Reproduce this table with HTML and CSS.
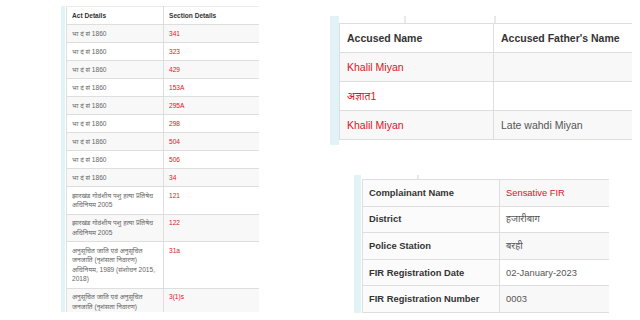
FILE: index.html
```html
<!DOCTYPE html>
<html>
<head>
  <title>FIR Details</title>
  <link rel="stylesheet" href="styles.css">
</head>
<body>

  <div class="board">

    <div class="panel acts">
      <table class="grid">
        <thead>
          <tr><th class="w-act">Act Details</th><th>Section Details</th></tr>
        </thead>
        <tbody>
          <tr><td>भा दं सं 1860</td><td class="red">341</td></tr>
          <tr><td>भा दं सं 1860</td><td class="red">323</td></tr>
          <tr><td>भा दं सं 1860</td><td class="red">429</td></tr>
          <tr><td>भा दं सं 1860</td><td class="red">153A</td></tr>
          <tr><td>भा दं सं 1860</td><td class="red">295A</td></tr>
          <tr><td>भा दं सं 1860</td><td class="red">298</td></tr>
          <tr><td>भा दं सं 1860</td><td class="red">504</td></tr>
          <tr><td>भा दं सं 1860</td><td class="red">506</td></tr>
          <tr><td>भा दं सं 1860</td><td class="red">34</td></tr>
          <tr><td>झारखंड गोवंशीय पशु हत्या प्रतिषेध अधिनियम 2005</td><td class="red">121</td></tr>
          <tr><td>झारखंड गोवंशीय पशु हत्या प्रतिषेध अधिनियम 2005</td><td class="red">122</td></tr>
          <tr><td>अनुसूचित जाति एवं अनुसूचित जनजाति (नृशंसता निवारण) अधिनियम, 1989 (संशोधन 2015, 2018)</td><td class="red">31a</td></tr>
          <tr><td>अनुसूचित जाति एवं अनुसूचित जनजाति (नृशंसता निवारण)</td><td class="red">3(1)s</td></tr>
        </tbody>
      </table>
    </div>

    <div class="side">

      <div class="panel accused">
        <div class="cut">
          <span class="cut-a"></span><span class="cut-b"></span>
        </div>
        <table class="grid">
          <thead>
            <tr><th class="w-name">Accused Name</th><th>Accused Father's Name</th></tr>
          </thead>
          <tbody>
            <tr><td class="red">Khalil Miyan</td><td></td></tr>
            <tr><td class="red">अज्ञात1</td><td></td></tr>
            <tr><td class="red">Khalil Miyan</td><td>Late wahdi Miyan</td></tr>
          </tbody>
        </table>
      </div>

      <div class="panel info">
        <div class="cut">
          <span class="cut-c"></span>
        </div>
        <table class="grid">
          <tbody>
            <tr><th class="w-label">Complainant Name</th><td class="red">Sensative FIR</td></tr>
            <tr><th>District</th><td>हजारीबाग</td></tr>
            <tr><th>Police Station</th><td>बरही</td></tr>
            <tr><th>FIR Registration Date</th><td>02-January-2023</td></tr>
            <tr><th>FIR Registration Number</th><td>0003</td></tr>
          </tbody>
        </table>
      </div>

    </div>

  </div>

</body>
</html>
```

FILE: styles.css
```css
html, body { margin: 0; height: 320px; overflow: hidden; background: #fff; }
body { font-family: "Liberation Sans", Arial, "Noto Sans", sans-serif; color: #555; }

.board { display: flex; align-items: flex-start; }
.side { display: flex; flex-direction: column; margin-left: 71px; }

.panel { border-left: 4px solid #e2f3f8; overflow: hidden; }

.grid { border-collapse: collapse; width: 100%; table-layout: fixed; }
.grid th, .grid td { border: 1px solid #dedede; text-align: left; vertical-align: top; }
.grid tr > :last-child { border-right: 0; }
.grid th { color: #333; font-weight: bold; }
.grid tbody tr:nth-child(odd) td { background: #f8f8f8; }
.red { color: #d9161c; }

/* act list, small print */
.acts { width: 193px; height: 306px; margin: 6px 0 0 61px; padding-left: 1px; }
.acts .grid { font-size: 6.6px; line-height: 9.5px; }
.acts th, .acts td { padding: 3.5px 5px 4px; }
.acts thead th { border-top-color: #ececec; }
.acts td { color: #666; }
.acts .red { color: #d9161c; }
.w-act { width: 86px; }

/* accused table */
.accused { width: 293px; margin-top: 16px; border-left-width: 9px; padding-bottom: 5px; }
.accused .grid { font-size: 10.5px; line-height: 13px; }
.accused th, .accused td { padding: 7.5px 7px; }
.w-name { width: 139px; }

/* complainant info */
.info { width: 247px; margin: 30px 0 0 24px; border-left-width: 7px; padding-left: 1px; }
.info .grid { font-size: 9.4px; line-height: 12px; }
.info th, .info td { padding: 6.8px 6px; }
.info tbody tr td { background: #fff; }
.info th { background: #fbfbfb; }
.w-label { width: 124px; }

/* edge of the row above, cut off */
.cut { display: flex; height: 7px; }
.cut span { border-right: 2px solid #e8e8e8; }
.cut-a { width: 65px; }
.cut-b { width: 88px; }
.info .cut { height: 4px; }
.cut-c { width: 55px; }
```
